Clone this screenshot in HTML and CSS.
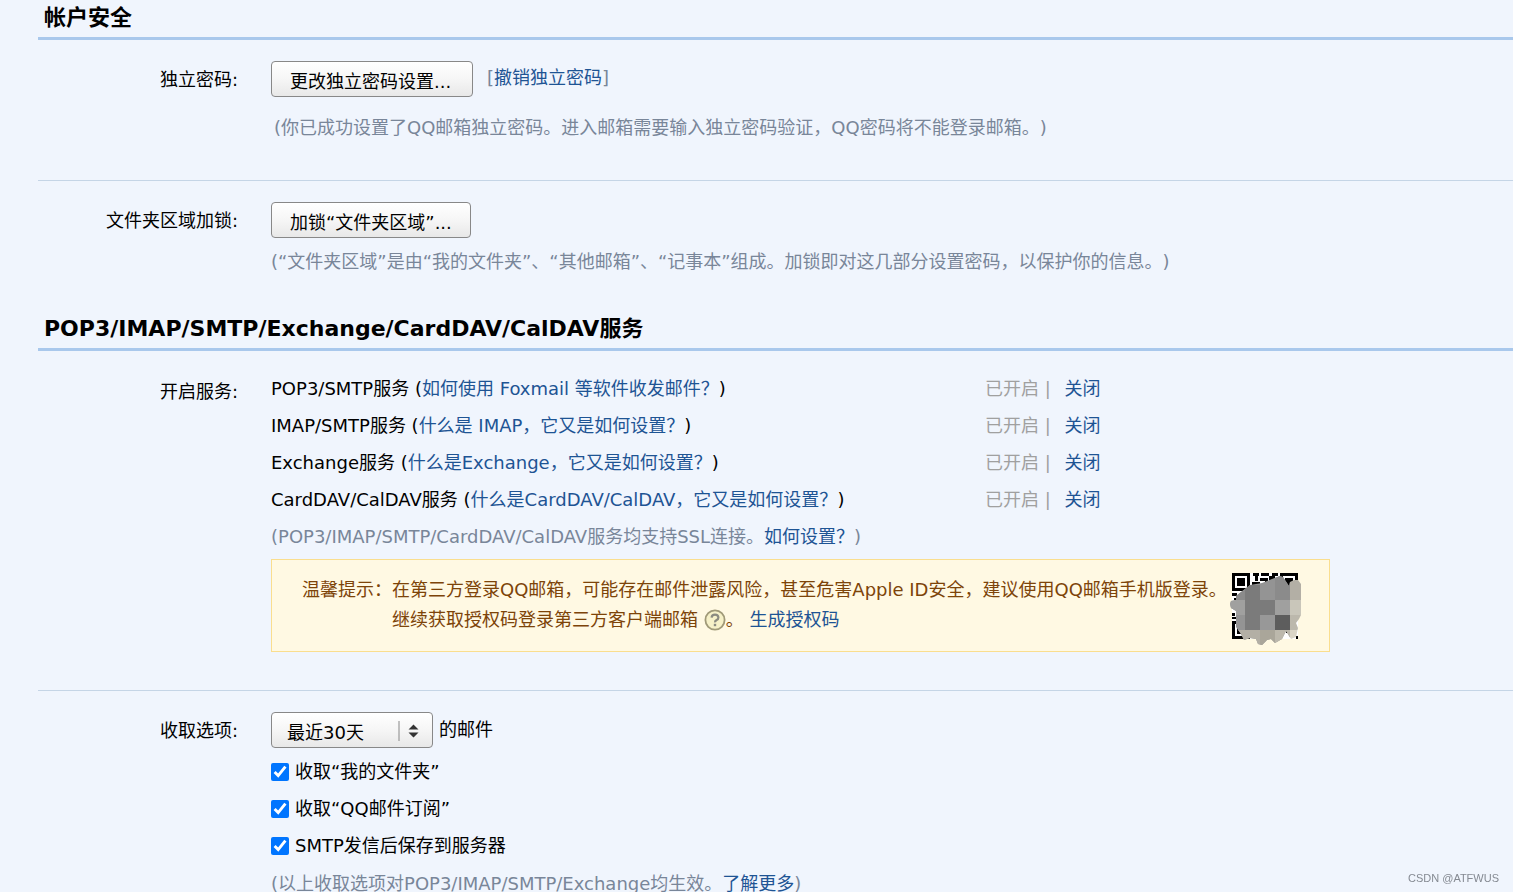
FILE: index.html
```html
<!DOCTYPE html>
<html lang="zh-CN">
<head>
<meta charset="utf-8">
<title>帐户设置</title>
<link rel="stylesheet" href="styles.css">
</head>
<body>
<main class="settings">
  <section>
    <h2 class="heading">帐户安全</h2>
    <div class="row ruled">
      <div class="label">独立密码:</div>
      <div>
        <div class="line">
          <button type="button" class="btn btn-password">更改独立密码设置...</button>
          <span class="bracket">[<a href="#">撤销独立密码</a>]</span>
        </div>
        <p class="hint hint-password">(你已成功设置了QQ邮箱独立密码。进入邮箱需要输入独立密码验证，QQ密码将不能登录邮箱。)</p>
      </div>
    </div>
    <div class="row row-lock">
      <div class="label">文件夹区域加锁:</div>
      <div>
        <div class="line"><button type="button" class="btn btn-lock">加锁“文件夹区域”...</button></div>
        <p class="hint hint-lock">(“文件夹区域”是由“我的文件夹”、“其他邮箱”、“记事本”组成。加锁即对这几部分设置密码，以保护你的信息。)</p>
      </div>
    </div>
  </section>

  <section>
    <h2 class="heading">POP3/IMAP/SMTP/Exchange/CardDAV/CalDAV服务</h2>
    <div class="row row-services ruled">
      <div class="label">开启服务:</div>
      <div>
        <ul class="services">
          <li><span>POP3/SMTP服务 (<a href="#">如何使用 Foxmail 等软件收发邮件？</a>)</span><span class="state">已开启 | <a href="#" class="off">关闭</a></span></li>
          <li><span>IMAP/SMTP服务 (<a href="#">什么是 IMAP，它又是如何设置？</a>)</span><span class="state">已开启 | <a href="#" class="off">关闭</a></span></li>
          <li><span>Exchange服务 (<a href="#">什么是Exchange，它又是如何设置？</a>)</span><span class="state">已开启 | <a href="#" class="off">关闭</a></span></li>
          <li><span>CardDAV/CalDAV服务 (<a href="#">什么是CardDAV/CalDAV，它又是如何设置？</a>)</span><span class="state">已开启 | <a href="#" class="off">关闭</a></span></li>
        </ul>
        <p class="hint hint-row">(POP3/IMAP/SMTP/CardDAV/CalDAV服务均支持SSL连接。<a href="#">如何设置？</a>)</p>
        <div class="notice">
          <div class="notice-label">温馨提示：</div>
          <div class="notice-text">
            <p>在第三方登录QQ邮箱，可能存在邮件泄露风险，甚至危害Apple ID安全，建议使用QQ邮箱手机版登录。</p>
            <p>继续获取授权码登录第三方客户端邮箱
              <svg class="help" width="22" height="22" viewBox="0 0 22 22" role="img" aria-label="帮助"><circle cx="11" cy="11" r="9.600" fill="#f6f1c8" stroke="#a09a78" stroke-width="1.800"/><path d="M7.600 8.600Q7.800 5.600 11 5.600T14.400 8.400Q14.400 10 12.600 11T11 13.400" fill="none" stroke="#8b8b80" stroke-width="2.200"/><rect x="9.800" y="14.800" width="2.400" height="2.400" fill="#8b8b80"/></svg>。 <a href="#">生成授权码</a></p>
          </div>
          <svg class="qr" width="72" height="73" viewBox="0 0 72 73" aria-hidden="true">
            <path fill="#fff" d="M2 0h66v66H2z"/>
            <g fill="#000" shape-rendering="crispEdges">
              <path fill-rule="evenodd" d="M2 0h18v18H2zM5 3v12h12V3zM7 5h8v8H7zM50 0h18v18H50zM53 3v12h12V3zM55 5h8v8H55zM2 48h18v18H2zM5 51v12h12V51zM7 53h8v8H7z"/>
              <path d="M23 0h6v3h-6zM31 0h8v3h-8zM42 0h6v3h-6zM25 3h3v5h-3zM30 5h8v3h-8zM39 3h6v5h-6zM22 9h8v3h-8zM35 8h5v3h-5zM2 20h5v3H2zM10 20h5v3h-5zM4 25h6v2H4zM2 40h3v3H2zM2 44h5v2H2zM56 57h3v3h-3zM63 60h3v3h-3zM66 63h2v3h-2z"/>
            </g>
            <clipPath id="smudge"><path d="M0 31L1 28 6 27V23L20 12 32 10 42 6 50 3 53 4 59 13 60 9 64 7 68 7 71 11V42L69 46 66 50 68 55 66 64 61 66 56 58 52 66 45 70 41 66 37 67 32 72 28 71 26 66 20 65 14 67 11 61 6 54V38L1 35z"/></clipPath>
            <g clip-path="url(#smudge)" shape-rendering="crispEdges">
              <path fill="#949494" d="M0 0h60v73H0z"/>
              <path fill="#8b8b8b" d="M0 0h15v27H0zM45 0h15v27H45z"/>
              <path fill="#a0a09f" d="M0 27h15v15H0zM45 27h15v15H45z"/>
              <path fill="#7b7b7b" d="M15 12h15v15H15zM15 27h30v15H15zM15 42h15v15H15z"/>
              <path fill="#989898" d="M30 42h15v15H30z"/>
              <path fill="#5d5d5d" d="M45 42h15v15H45z"/>
              <path fill="#b3afa5" d="M60 0h12v27H60zM0 57h30v16H0z"/>
              <path fill="#c9c6ba" d="M60 27h12v15H60z"/>
              <path fill="#bcb8ac" d="M60 42h12v15H60zM45 57h15v16H45z"/>
              <path fill="#aaa69a" d="M30 57h15v16H30z"/>
              <path fill="#dad5c6" d="M60 57h12v16H60z"/>
            </g>
          </svg>
        </div>
      </div>
    </div>
    <div class="row row-receive">
      <label class="label" for="range">收取选项:</label>
      <div>
        <div class="line line-select">
          <span class="select">
            <select id="range"><option>最近30天</option><option>全部</option></select>
            <svg class="select-mark" width="22" height="22" viewBox="0 0 22 22" aria-hidden="true"><path d="M1 1v20" stroke="#888"/><path fill="#333" d="M15.500 4.500l5 5h-10zM15.500 17.500l5-5h-10z"/></svg>
          </span>
          <span>的邮件</span>
        </div>
        <div class="checks">
          <label class="check"><input type="checkbox" checked>收取“我的文件夹”</label>
          <label class="check"><input type="checkbox" checked>收取“QQ邮件订阅”</label>
          <label class="check"><input type="checkbox" checked>SMTP发信后保存到服务器</label>
        </div>
        <p class="hint hint-row">(以上收取选项对POP3/IMAP/SMTP/Exchange均生效。<a href="#">了解更多</a>)</p>
      </div>
    </div>
  </section>
</main>
<div class="watermark">CSDN @ATFWUS</div>
</body>
</html>
```

FILE: styles.css
```css
* { box-sizing: border-box; }
body {
  margin: 0;
  height: 100vh;
  overflow: hidden;
  background: #f0f5fd;
  color: #000;
  font: 18px/30px "DejaVu Sans", "Noto Sans CJK SC", sans-serif;
  text-spacing-trim: space-all;
}
p, ul { margin: 0; padding: 0; list-style: none; }
a { color: #1e5494; text-decoration: none; }
.settings { padding: 1px 0 0 38px; white-space: nowrap; }
.heading {
  margin: 0;
  padding: 2px 0 4px 6px;
  border-bottom: 3px solid #a9c8ec;
  font-size: 22px;
  line-height: 30px;
  font-weight: bold;
}
.row {
  display: grid;
  grid-template-columns: 200px 1fr;
  column-gap: 33px;
  padding-top: 21px;
}
.ruled { padding-bottom: 37px; border-bottom: 1px solid #c5d5e6; }
.row-lock { padding-bottom: 35px; }
.row-services { padding-top: 19px; padding-bottom: 38px; }
.label { padding-top: 4px; text-align: right; }
.row-services .label { padding-top: 7px; }
.line { display: flex; align-items: center; gap: 14px; height: 36px; }
.line-select { gap: 6px; }
.btn, select {
  height: 36px;
  border: 1px solid #888;
  border-radius: 4px;
  background: linear-gradient(#fff, #f6f6f6 50%, #e8e8e8);
  color: #000;
  font: inherit;
}
.btn { padding: 6px 18px 0; line-height: 28px; text-align: left; }
.btn-password { min-width: 202px; }
.btn-lock { min-width: 199px; }
.bracket, .hint { color: #798699; }
.bracket { padding-bottom: 2px; }
.hint-password { margin-top: 16px; padding-left: 3px; }
.hint-lock { margin-top: 9px; }
.hint-row, .services li, .check { line-height: 37px; height: 37px; }
.services li { display: grid; grid-template-columns: 714px auto; }
.state { color: #a0a0a0; }
.off { margin-left: 8px; }
.notice {
  display: flex;
  max-width: 1059px;
  margin-top: 4px;
  padding: 13px 27px 5px 30px;
  border: 1px solid #fade8e;
  background: #fff9e3;
  color: #7d4409;
}
.notice-label, .notice-text { padding-top: 2px; }
.notice-text { flex: 1; }
.help { vertical-align: -5px; }
.qr { flex: none; }
.select { position: relative; display: flex; }
select { width: 162px; padding: 5px 15px 0; appearance: none; }
.select-mark { position: absolute; right: 13px; top: 8px; pointer-events: none; }
.checks { margin: 5px 0 1px; }
.check { display: flex; align-items: center; gap: 6px; }
.check input { width: 18px; height: 18px; margin: 0; accent-color: #0075ff; }
.watermark {
  position: fixed;
  right: 14px;
  bottom: 4px;
  color: #858a92;
  font: 11px/20px "Liberation Sans", sans-serif;
}
```
